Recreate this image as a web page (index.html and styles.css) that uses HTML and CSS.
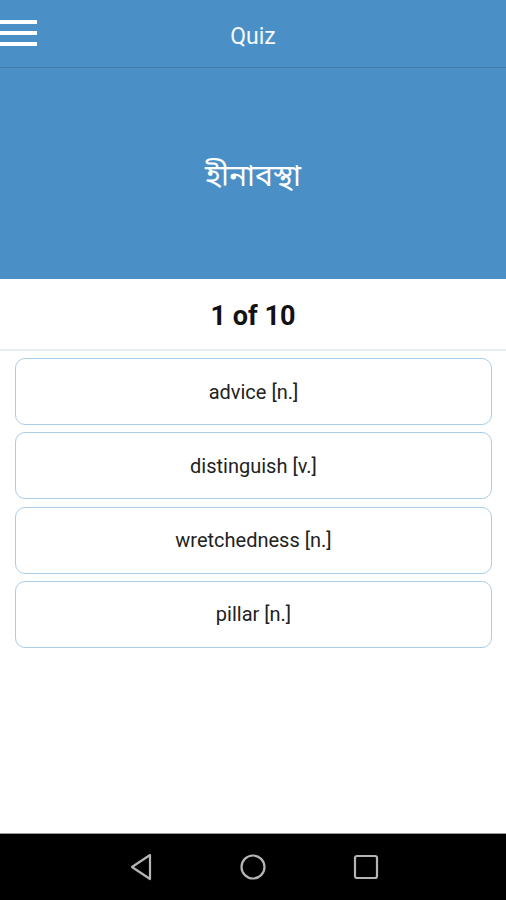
FILE: index.html
```html
<!DOCTYPE html>
<html lang="en">
<head>
    <meta charset="UTF-8">
    <meta name="viewport" content="width=device-width, initial-scale=1.0">
    <title>Quiz</title>
    <link rel="stylesheet" href="styles.css">
</head>
<body>
    <div class="app">
        <div class="toolbar">
            <div class="menu-btn">
                <span></span>
                <span></span>
                <span></span>
            </div>
            <div class="title">Quiz</div>
        </div>
        <div class="question">হীনাবস্থা</div>
        <div class="counter">1 of 10</div>
        <div class="options">
            <div class="option">advice [n.]</div>
            <div class="option">distinguish [v.]</div>
            <div class="option">wretchedness [n.]</div>
            <div class="option">pillar [n.]</div>
        </div>
    </div>
    <div class="navbar">
        <svg width="24" height="28" viewBox="0 0 24 28">
            <path d="M21 2 L3 14 L21 26 Z" fill="none" stroke="#b5b5b5" stroke-width="2.2" stroke-linejoin="round"/>
        </svg>
        <svg width="28" height="28" viewBox="0 0 28 28">
            <circle cx="14" cy="14" r="11.5" fill="none" stroke="#b5b5b5" stroke-width="2.2"/>
        </svg>
        <svg width="26" height="26" viewBox="0 0 26 26">
            <rect x="2" y="2" width="22" height="22" rx="2" fill="none" stroke="#b5b5b5" stroke-width="2.2"/>
        </svg>
    </div>
</body>
</html>
```

FILE: styles.css
```css
body {
    margin: 0;
    font-family: Roboto, "Noto Sans", sans-serif;
    background: #fff;
    height: 900px;
    display: flex;
    flex-direction: column;
}
.app {
    flex: 1;
}
.toolbar {
    height: 67px;
    background-color: #4a90c6;
    border-bottom: 1px solid #3f7cac;
    display: flex;
    align-items: center;
    position: relative;
}
.menu-btn {
    width: 37px;
    display: flex;
    flex-direction: column;
    gap: 7px;
    margin-top: -1px;
}
.menu-btn span {
    display: block;
    height: 4px;
    background: #fff;
}
.title {
    position: absolute;
    left: 0;
    right: 0;
    top: 23px;
    text-align: center;
    color: #f4f8fc;
    font-size: 23px;
    pointer-events: none;
}
.question {
    height: 211px;
    background-color: #4a90c6;
    color: #fff;
    font-family: "Noto Sans Bengali", "Lohit Bengali", "Noto Sans", sans-serif;
    font-size: 30px;
    display: flex;
    justify-content: center;
    align-items: center;
    padding-top: 8px;
    box-sizing: border-box;
}
.counter {
    height: 72px;
    box-sizing: border-box;
    padding-top: 4px;
    border-bottom: 2px solid #e6edf4;
    display: flex;
    justify-content: center;
    align-items: center;
    font-size: 27px;
    font-weight: bold;
    color: #111;
}
.options {
    padding: 7px 14px 0 15px;
    display: flex;
    flex-direction: column;
    gap: 7.3px;
}
.option {
    height: 67px;
    box-sizing: border-box;
    border: 1px solid #a9cde9;
    border-radius: 10px;
    display: flex;
    justify-content: center;
    align-items: center;
    font-size: 20px;
    color: #222;
}
.navbar {
    height: 66px;
    background: #000;
    border-top: 1px solid #9a9a9a;
    display: flex;
    justify-content: center;
    align-items: center;
    gap: 86px;
    padding-left: 2px;
}
```
